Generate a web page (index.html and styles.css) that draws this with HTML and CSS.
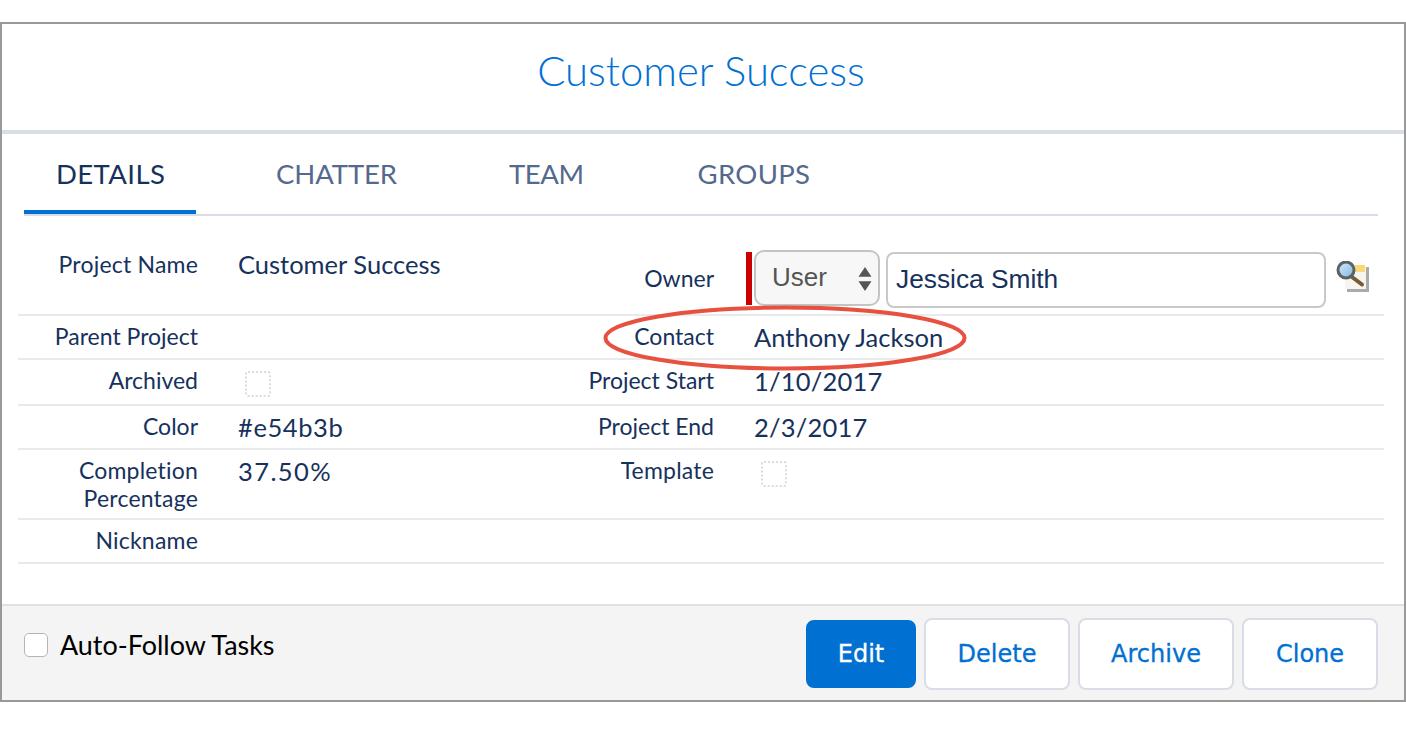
FILE: index.html
```html
<!DOCTYPE html>
<html lang="en">
<head>
<meta charset="utf-8">
<title>Customer Success</title>
<link rel="stylesheet" href="styles.css">
</head>
<body>
<div class="frame">
  <header class="title-bar"><h1 class="title">Customer Success</h1></header>
  <nav class="tabs">
    <a class="tab tab-active">DETAILS</a>
    <a class="tab tab-chatter">CHATTER</a>
    <a class="tab tab-team">TEAM</a>
    <a class="tab tab-groups">GROUPS</a>
  </nav>
  <section class="details">
    <div class="row row-first">
      <div class="label label-wide">Project Name</div>
      <div class="value">Customer Success</div>
      <div class="label label-owner">Owner</div>
      <div class="value value-owner">
        <span class="required"></span>
        <span class="select">User
          <svg class="arrows" width="14" height="24" viewBox="0 0 14 26" preserveAspectRatio="none"><path d="M7 0 13.500 10.500H.5zM7 26 .5 15.500h13z" fill="#555"/></svg>
        </span>
        <span class="input">Jessica Smith</span>
        <svg class="lookup" width="34" height="32" viewBox="0 0 34 32">
          <defs>
            <linearGradient id="lens" x1="0" y1="0" x2="1" y2="1"><stop offset="0" stop-color="#d4ecfa"/><stop offset="1" stop-color="#7db7e0"/></linearGradient>
          </defs>
          <rect x="11" y="6" width="22" height="25" fill="#aaa"/>
          <rect x="9" y="4" width="21" height="24" fill="#f7f6ee"/>
          <rect x="19" y="4" width="10" height="7" fill="#fbd77a"/>
          <path d="M16 16 26 23.500" stroke="#7a5a38" stroke-width="4" stroke-linecap="round"/>
          <circle cx="10" cy="9" r="8" fill="url(#lens)" stroke="#5c6266" stroke-width="3"/>
        </svg>
      </div>
    </div>
    <div class="row row-44">
      <div class="label">Parent Project</div>
      <div class="value"></div>
      <div class="label">Contact</div>
      <div class="value">Anthony Jackson</div>
    </div>
    <div class="row row-46">
      <div class="label">Archived</div>
      <div class="value"><span class="dotbox"></span></div>
      <div class="label">Project Start</div>
      <div class="value value-date">1/10/2017</div>
    </div>
    <div class="row row-44">
      <div class="label">Color</div>
      <div class="value value-hex">#e54b3b</div>
      <div class="label">Project End</div>
      <div class="value value-date">2/3/2017</div>
    </div>
    <div class="row row-70">
      <div class="label label-wide">Completion Percentage</div>
      <div class="value value-pct">37.50%</div>
      <div class="label label-wide">Template</div>
      <div class="value"><span class="dotbox"></span></div>
    </div>
    <div class="row row-44">
      <div class="label label-wide">Nickname</div>
      <div class="value"></div>
      <div class="label"></div>
      <div class="value"></div>
    </div>
  </section>
  <footer class="footer">
    <label class="follow"><span class="checkbox"></span>Auto-Follow Tasks</label>
    <div class="buttons">
      <button class="btn btn-primary">Edit</button>
      <button class="btn btn-delete">Delete</button>
      <button class="btn btn-archive">Archive</button>
      <button class="btn btn-clone">Clone</button>
    </div>
  </footer>
  <svg class="circle" width="366" height="68" viewBox="0 0 366 68"><ellipse cx="183" cy="34" rx="179.500" ry="30.500" fill="none" stroke="#e8503f" stroke-width="4"/></svg>
</div>
</body>
</html>
```

FILE: styles.css
```css
* { box-sizing: border-box; }
html, body { margin: 0; padding: 0; background: #fff; }
body { padding-top: 22px; font-family: "Lato", "Open Sans", sans-serif; color: #16325c; }
.frame { position: relative; width: 1406px; height: 680px; border: 2px solid #999; background: #fff; display: flex; flex-direction: column; }
.title-bar { height: 110px; border-bottom: 4px solid #d8dde6; display: flex; align-items: center; justify-content: center; padding-right: 4px; }
.title { margin: 0; font-size: 41.800px; font-weight: 300; color: #0070d2; line-height: 1; padding-bottom: 13px; }
.tabs { height: 82px; margin: 0 26px 0 22px; border-bottom: 2px solid #d8dde6; display: flex; align-items: flex-start; }
.tab { font-size: 27.500px; line-height: 80px; color: #54698d; }
.tab-active { width: 172px; height: 80px; padding-left: 32px; color: #16325c; border-bottom: 4px solid #0070d2; letter-spacing: .4px; }
.tab-chatter { margin-left: 80px; letter-spacing: -.1px; }
.tab-team { margin-left: 112px; letter-spacing: -.4px; }
.tab-groups { margin-left: 114px; letter-spacing: .3px; }
.details { margin: 0 20px 0 16px; flex: 1; }
.row { display: grid; grid-template-columns: 180px 356px 160px 1fr; border-bottom: 2px solid #e9eaec; font-size: 23px; }
.row-first { height: 100px; }
.row-44 { height: 44px; }
.row-46 { height: 46px; }
.row-70 { height: 70px; }
.label { text-align: right; line-height: 28px; padding-top: 6px; }
.label-wide { letter-spacing: .2px; }
.value { padding-left: 40px; font-size: 25.500px; line-height: 28px; padding-top: 7px; }
.value-hex { letter-spacing: .6px; }
.value-date { letter-spacing: .2px; }
.value-pct { letter-spacing: 1.400px; }
.row-first .label:first-child { padding-top: 34px; }
.row-first .value:nth-child(2) { padding-top: 34px; }
.label-owner { padding-top: 48px; }
.value-owner { display: flex; align-items: flex-start; padding: 0 0 0 32px; position: relative; }
.required { width: 6px; height: 53px; margin-top: 36px; background: #c00; }
.select { width: 126px; height: 56px; margin: 34px 0 0 2px; border: 2px solid #c4c4c4; border-radius: 10px; background: #f7f7f7; font-family: "Liberation Sans", sans-serif; font-size: 26px; line-height: 50px; color: #555; padding-left: 16px; position: relative; }
.arrows { position: absolute; right: 6px; top: 15px; }
.input { width: 440px; height: 56px; margin: 36px 0 0 6px; border: 2px solid #c9c9c9; border-radius: 8px; background: #fff; font-family: "Liberation Sans", sans-serif; font-size: 26.300px; line-height: 50px; color: #16325c; padding-left: 8px; }
.lookup { margin: 45px 0 0 10px; }
.dotbox { display: block; width: 26px; height: 26px; margin: 4px 0 0 7px; border: 2px dotted #dcdcdc; border-radius: 3px; }
.footer { height: 96px; border-top: 2px solid #e0e0e0; background: #f4f4f4; display: flex; justify-content: space-between; padding: 0 26px 0 22px; }
.follow { display: flex; align-items: center; height: 76px; font-size: 26.900px; color: #000; }
.checkbox { width: 24px; height: 24px; margin: 2px 12px 0 0; background: #fff; border: 1px solid #b5b5b5; border-radius: 5px; }
.buttons { display: flex; gap: 8px; align-items: center; height: 96px; }
.btn { height: 72px; border: 2px solid #d8dde6; border-radius: 8px; background: #fff; color: #0070d2; font-family: "DejaVu Sans", sans-serif; font-size: 24px; padding: 0; -webkit-text-stroke: .3px currentColor; }
.btn-primary { width: 110px; height: 68px; background: #0070d2; border-color: #0070d2; color: #fff; }
.btn-delete { width: 146px; }
.btn-archive { width: 156px; }
.btn-clone { width: 136px; }
.circle { position: absolute; left: 600px; top: 280px; }
```
